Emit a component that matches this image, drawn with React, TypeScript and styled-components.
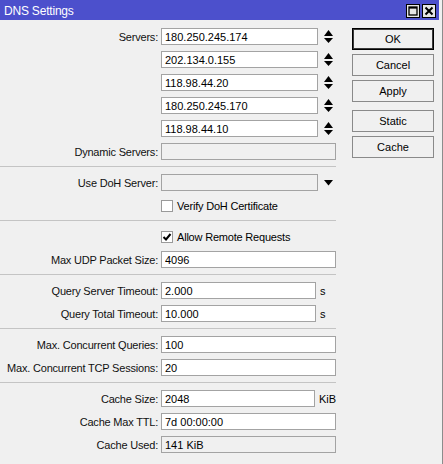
import React from "react";
import styled, { createGlobalStyle } from "styled-components";

const GlobalStyle = createGlobalStyle`
  * { box-sizing: border-box; }
  body {
    margin: 0;
    background: #f0f0f0;
    font-family: "Liberation Sans", Arial, sans-serif;
    font-size: 11px;
    color: #000;
  }
`;

const servers = [
  "180.250.245.174",
  "202.134.0.155",
  "118.98.44.20",
  "180.250.245.170",
  "118.98.44.10",
];

const UpDownIcon = () => (
  <svg width="9" height="14" viewBox="0 0 9 14">
    <polygon points="4.5,0 9,6 0,6" fill="#000" />
    <polygon points="0,8 9,8 4.5,13" fill="#000" />
  </svg>
);

const DropIcon = () => (
  <svg width="9" height="6" viewBox="0 0 9 6">
    <polygon points="0,0 9,0 4.5,5.5" fill="#000" />
  </svg>
);

const CheckMark = () => (
  <svg width="10" height="10" viewBox="0 0 10 10">
    <polyline
      points="1.5,5 4,7.5 8.5,2"
      fill="none"
      stroke="#000"
      strokeWidth="2"
    />
  </svg>
);

const App = () => {
  return (
    <Window>
      <GlobalStyle />
      <TitleBar>
        <Title>DNS Settings</Title>
        <TitleButtons>
          <TitleButton aria-label="maximize">
            <svg width="10" height="10" viewBox="0 0 10 10">
              <rect x="1" y="1" width="8" height="8" fill="none" stroke="#000" strokeWidth="1.3" />
              <rect x="1" y="1" width="8" height="1.6" fill="#000" />
            </svg>
          </TitleButton>
          <TitleButton aria-label="close">
            <svg width="10" height="10" viewBox="0 0 10 10">
              <path d="M1.5 1.5 L8.5 8.5 M8.5 1.5 L1.5 8.5" stroke="#000" strokeWidth="2" />
            </svg>
          </TitleButton>
        </TitleButtons>
      </TitleBar>

      <Body>
        <Form>
          {servers.map((ip, i) => (
            <Row key={ip}>
              <Label>{i === 0 ? "Servers:" : ""}</Label>
              <Field $w={157} readOnly defaultValue={ip} />
              <Trail>
                <UpDownIcon />
              </Trail>
            </Row>
          ))}
          <Row>
            <Label>Dynamic Servers:</Label>
            <Field $w={175} $disabled readOnly defaultValue="" />
          </Row>
          <Separator />

          <Row>
            <Label>Use DoH Server:</Label>
            <Field $w={157} $disabled readOnly defaultValue="" />
            <Trail>
              <DropIcon />
            </Trail>
          </Row>
          <Row>
            <Label />
            <CheckBox />
            <CheckText>Verify DoH Certificate</CheckText>
          </Row>
          <Separator />

          <Row>
            <Label />
            <CheckBox>
              <CheckMark />
            </CheckBox>
            <CheckText>Allow Remote Requests</CheckText>
          </Row>
          <Row>
            <Label>Max UDP Packet Size:</Label>
            <Field $w={175} readOnly defaultValue="4096" />
          </Row>
          <Separator />

          <Row>
            <Label>Query Server Timeout:</Label>
            <Field $w={155} readOnly defaultValue="2.000" />
            <Unit>s</Unit>
          </Row>
          <Row>
            <Label>Query Total Timeout:</Label>
            <Field $w={155} readOnly defaultValue="10.000" />
            <Unit>s</Unit>
          </Row>
          <Separator />

          <Row>
            <Label>Max. Concurrent Queries:</Label>
            <Field $w={175} readOnly defaultValue="100" />
          </Row>
          <Row>
            <Label>Max. Concurrent TCP Sessions:</Label>
            <Field $w={175} readOnly defaultValue="20" />
          </Row>
          <Separator />

          <Row>
            <Label>Cache Size:</Label>
            <Field $w={155} readOnly defaultValue="2048" />
            <Unit>KiB</Unit>
          </Row>
          <Row>
            <Label>Cache Max TTL:</Label>
            <Field $w={175} readOnly defaultValue="7d 00:00:00" />
          </Row>
          <Row>
            <Label>Cache Used:</Label>
            <Field $w={175} $disabled readOnly defaultValue="141 KiB" />
          </Row>
        </Form>

        <Buttons>
          <DialogButton $default>OK</DialogButton>
          <DialogButton>Cancel</DialogButton>
          <DialogButton>Apply</DialogButton>
          <DialogButton $spaced>Static</DialogButton>
          <DialogButton>Cache</DialogButton>
        </Buttons>
      </Body>
    </Window>
  );
};

export default App;

const Window = styled.div`
  width: 443px;
  height: 464px;
  background: #f0f0f0;
  border-right: 1px solid #8c8c8c;
  overflow: hidden;
`;

const TitleBar = styled.div`
  height: 20px;
  margin-right: 3px;
  background: #4c50cc;
  display: flex;
  align-items: center;
  padding: 0 3px 0 4px;
`;

const Title = styled.div`
  color: #fff;
  font-size: 12px;
  letter-spacing: -0.2px;
  padding-top: 2px;
`;

const TitleButtons = styled.div`
  margin-left: auto;
  display: flex;
  gap: 2px;
  padding-top: 1px;
`;

const TitleButton = styled.div`
  width: 14px;
  height: 14px;
  border: 1px solid #000;
  background: #e6e6e6;
  display: flex;
  align-items: center;
  justify-content: center;
`;

const Body = styled.div`
  display: flex;
  padding-top: 8px;
`;

const Form = styled.div`
  width: 336px;
  display: flex;
  flex-direction: column;
`;

const Row = styled.div`
  display: flex;
  align-items: center;
  height: 17px;
  margin-bottom: 6px;
`;

const Label = styled.div`
  width: 161px;
  flex-shrink: 0;
  padding-right: 3px;
  text-align: right;
  white-space: nowrap;
  letter-spacing: -0.2px;
  color: #111;
`;

const Field = styled.input<{ $w: number; $disabled?: boolean }>`
  width: ${(p) => p.$w}px;
  height: 17px;
  margin: 0;
  padding: 0 3px;
  border: 1px solid #a3a3a3;
  border-radius: 0;
  background: ${(p) => (p.$disabled ? "#f0f0f0" : "#fff")};
  font-family: inherit;
  font-size: 11px;
  color: #000;
  outline: none;
`;

const Trail = styled.div`
  margin-left: 6px;
  display: flex;
  align-items: center;
`;

const Unit = styled.span`
  margin-left: 4px;
`;

const CheckBox = styled.div`
  width: 12px;
  height: 12px;
  border: 1px solid #9a9a9a;
  background: #fff;
  display: flex;
  align-items: center;
  justify-content: center;
`;

const CheckText = styled.span`
  margin-left: 4px;
  letter-spacing: -0.2px;
`;

const Separator = styled.div`
  height: 1px;
  background: #c4c4c4;
  margin-bottom: 7px;
`;

const Buttons = styled.div`
  margin-left: 16px;
  width: 82px;
  display: flex;
  flex-direction: column;
  gap: 4px;
`;

const DialogButton = styled.button<{ $default?: boolean; $spaced?: boolean }>`
  height: 22px;
  margin: ${(p) => (p.$spaced ? "4px 0 0" : "0")};
  padding: 0;
  border: 1px solid ${(p) => (p.$default ? "#000" : "#8a8a8a")};
  box-shadow: ${(p) => (p.$default ? "inset 0 0 0 1px #3a3a3a" : "none")};
  border-radius: 0;
  background: #f0f0f0;
  font-family: inherit;
  font-size: 11px;
  color: #000;
`;
